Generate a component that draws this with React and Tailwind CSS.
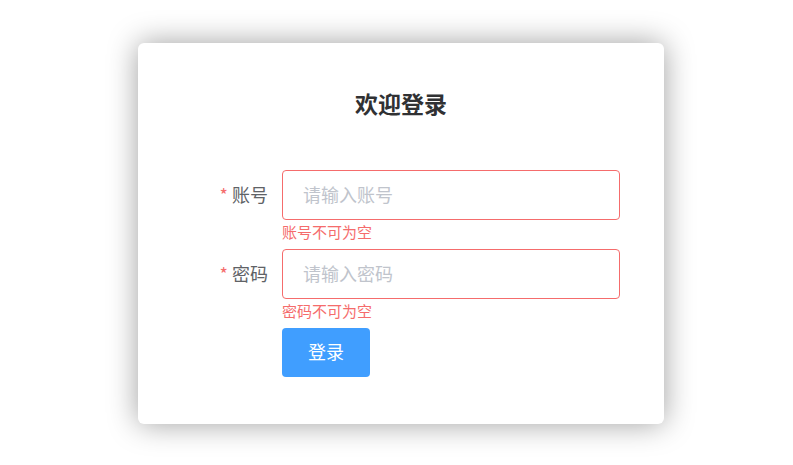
import React, { useState } from 'react';

export default function App() {
  const [form, setForm] = useState({ account: '', password: '' });

  const handleChange = (e) => {
    setForm({ ...form, [e.target.name]: e.target.value });
  };

  return (
    <div className="min-h-[465px] w-full bg-white flex pl-[138px] pt-[43px] font-['Microsoft_YaHei','Noto_Sans_CJK_SC',sans-serif]">
      <div className="w-[526px] h-[381px] bg-white rounded-[6px] shadow-[0_0_30px_rgba(0,0,0,0.38)] pt-[45px]">
        <h2 className="text-center text-[23px] leading-[30px] font-bold text-[#303133]">欢迎登录</h2>

        <form className="mt-[52px] ml-[44px]" onSubmit={(e) => e.preventDefault()}>
          {/* 账号 */}
          <div className="flex">
            <label className="w-[100px] pr-[14px] pb-[2px] h-[50px] flex items-center justify-end text-[18px] text-[#606266]">
              <span className="text-[#f56c6c] mr-[4px]">*</span>账号
            </label>
            <div>
              <input
                type="text"
                name="account"
                value={form.account}
                onChange={handleChange}
                placeholder="请输入账号"
                className="w-[338px] h-[50px] px-[20px] pb-[2px] rounded-[4px] border border-[#f56c6c] outline-none text-[18px] text-[#606266] placeholder:text-[#c0c4cc]"
              />
              <div className="h-[29px] pt-[3px] text-[15px] leading-[18px] text-[#f56c6c]">账号不可为空</div>
            </div>
          </div>

          {/* 密码 */}
          <div className="flex">
            <label className="w-[100px] pr-[14px] pb-[2px] h-[50px] flex items-center justify-end text-[18px] text-[#606266]">
              <span className="text-[#f56c6c] mr-[4px]">*</span>密码
            </label>
            <div>
              <input
                type="password"
                name="password"
                value={form.password}
                onChange={handleChange}
                placeholder="请输入密码"
                className="w-[338px] h-[50px] px-[20px] pb-[2px] rounded-[4px] border border-[#f56c6c] outline-none text-[18px] text-[#606266] placeholder:text-[#c0c4cc]"
              />
              <div className="h-[29px] pt-[3px] text-[15px] leading-[18px] text-[#f56c6c]">密码不可为空</div>
            </div>
          </div>

          <div className="pl-[100px]">
            <button
              type="submit"
              className="w-[88px] h-[49px] pb-[2px] rounded-[4px] bg-[#409eff] text-white text-[18px]"
            >
              登录
            </button>
          </div>
        </form>
      </div>
    </div>
  );
}
